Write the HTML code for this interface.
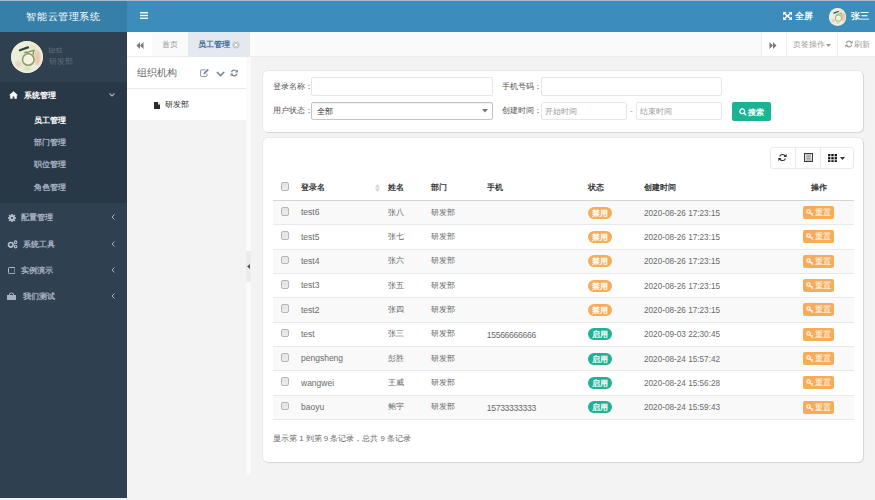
<!DOCTYPE html>
<html><head><meta charset="utf-8">
<style>
*{margin:0;padding:0;box-sizing:border-box}
html,body{width:875px;height:500px;overflow:hidden;background:#f3f3f4;font-family:"Liberation Sans",sans-serif;font-size:8px;color:#676a6c}
.a{position:absolute}
#topline{left:0;top:0;width:875px;height:1px;background:#a9bac8}
#logo{left:0;top:1px;width:127px;height:31px;background:#367fa9;color:#fff;font-size:10px;text-align:center;line-height:31px;letter-spacing:0.6px;text-indent:0px}
#hdr{left:127px;top:1px;width:748px;height:31px;background:#3c8dbc}
#side{left:0;top:32px;width:127px;height:466px;background:#2f4050}
#tabs{left:127px;top:32px;width:748px;height:25px;background:#fafafa;border-bottom:1px solid #ececec}
#tree{left:127px;top:57px;width:119px;height:63px;background:#fff}
#split{left:246px;top:57px;width:4.5px;height:418px;background:#fafafa}
.card{background:#fff;border-radius:5px;box-shadow:0 0 0 1px rgba(0,0,0,.04),1px 1px 1px rgba(0,0,0,.09)}
#c1{left:263px;top:70.5px;width:600px;height:61px}
#c2{left:263px;top:138px;width:600px;height:324px}
.avatar{border-radius:50%;background:radial-gradient(circle at 50% 55%,#f3efd8 0%,#ece6c6 55%,#e4dcb8 100%);overflow:hidden}
.ic{position:absolute}
.menu{position:absolute;left:0;width:127px;font-weight:bold;color:#a7b1c2;font-size:8.4px;line-height:12px}
.sub{position:absolute;left:33.5px;color:#a7b1c2;font-weight:bold;font-size:8.4px;line-height:12px}
.lbl{font-size:8px;line-height:12px;color:#555}
.inp{border:1px solid #e5e6e7;border-radius:2px;background:#fff}
.cb{width:8.5px;height:8.5px;border:1px solid #b5b5b5;border-radius:2px;background:linear-gradient(#e4e4e4,#ececec)}
.th{font-size:8px;line-height:12px;color:#333;font-weight:bold}
.td{font-size:8px;line-height:12px;color:#676a6c;white-space:nowrap}
.badge{width:23.5px;height:12px;border-radius:6px;color:#fff;font-size:8px;line-height:13.5px;text-align:center;font-weight:bold}
.btnw{width:31px;height:13px;border-radius:2px;background:#f8ac59;color:#fff;font-size:8px;line-height:13px}
</style></head><body>
<div class="a" id="topline"></div>
<div class="a" id="logo">智能云管理系统</div>
<div class="a" id="hdr"></div>
<svg class="a" style="left:140px;top:12px" width="8" height="7" viewBox="0 0 8 7"><rect x="0" y="0" width="8" height="1.4" fill="#fff"/><rect x="0" y="2.8" width="8" height="1.4" fill="#fff"/><rect x="0" y="5.6" width="8" height="1.4" fill="#fff"/></svg>
<svg class="a" style="left:783px;top:12px" width="9" height="8" viewBox="0 0 9 8"><g fill="#fff"><path d="M0 0H3.6L0 3.4z"/><path d="M9 0H5.4L9 3.4z"/><path d="M0 8H3.6L0 4.6z"/><path d="M9 8H5.4L9 4.6z"/></g><path d="M1 1 8 7M8 1 1 7" stroke="#fff" stroke-width="1.6"/></svg>
<div class="a" style="left:795px;top:9px;color:#fff;font-weight:bold;font-size:9px;line-height:14px">全屏</div>
<div class="a avatar" style="left:828.5px;top:8px;width:17.5px;height:17.5px"><svg width="100%" height="100%" viewBox="0 0 100 100" style="display:block"><defs><filter id="bl2"><feGaussianBlur stdDeviation="3"/></filter><filter id="sb2"><feGaussianBlur stdDeviation="1.2"/></filter></defs><circle cx="50" cy="50" r="50" fill="#edefdc"/><g filter="url(#bl2)" opacity="0.55"><ellipse cx="82" cy="52" rx="10" ry="24" fill="#e4a88c"/><ellipse cx="24" cy="72" rx="11" ry="9" fill="#e8b8a0"/><ellipse cx="68" cy="20" rx="12" ry="7" fill="#ecd8a0"/><ellipse cx="50" cy="86" rx="11" ry="6" fill="#b8d0a8"/><ellipse cx="40" cy="50" rx="6" ry="14" fill="#c8d8b8"/></g><g filter="url(#sb2)"><path d="M28 29 L53 20" stroke="#2f4a36" stroke-width="7" stroke-linecap="round"/><path d="M42 38 Q46 32 52 36 Q62 30 72 29 Q68 38 70 44" stroke="#7c9458" stroke-width="4" fill="none"/><circle cx="54" cy="58" r="18" fill="#f6f2e0" stroke="#889c64" stroke-width="4.5"/></g></svg></div>
<div class="a" style="left:851px;top:9px;color:#fff;font-size:9px;line-height:14px;font-weight:bold">张三</div>
<div class="a" id="side"></div>
<div class="a" style="left:0;top:82px;width:127px;height:121px;background:#293846"></div>
<div class="a avatar" style="left:11px;top:41px;width:32px;height:32px"><svg width="100%" height="100%" viewBox="0 0 100 100" style="display:block"><defs><filter id="bl1"><feGaussianBlur stdDeviation="3"/></filter><filter id="sb1"><feGaussianBlur stdDeviation="1.2"/></filter></defs><circle cx="50" cy="50" r="50" fill="#edefdc"/><g filter="url(#bl1)" opacity="0.55"><ellipse cx="82" cy="52" rx="10" ry="24" fill="#e4a88c"/><ellipse cx="24" cy="72" rx="11" ry="9" fill="#e8b8a0"/><ellipse cx="68" cy="20" rx="12" ry="7" fill="#ecd8a0"/><ellipse cx="50" cy="86" rx="11" ry="6" fill="#b8d0a8"/><ellipse cx="40" cy="50" rx="6" ry="14" fill="#c8d8b8"/></g><g filter="url(#sb1)"><path d="M28 29 L53 20" stroke="#2f4a36" stroke-width="7" stroke-linecap="round"/><path d="M42 38 Q46 32 52 36 Q62 30 72 29 Q68 38 70 44" stroke="#7c9458" stroke-width="4" fill="none"/><circle cx="54" cy="58" r="18" fill="#f6f2e0" stroke="#889c64" stroke-width="4.5"/></g></svg></div>
<div class="a" style="left:48.5px;top:45px;color:#5f6d7b;font-size:8.5px;line-height:11px">test</div>
<div class="a" style="left:48.5px;top:55.5px;color:#5f6d7b;font-size:8px;line-height:11px">研发部</div>
<svg class="ic" style="left:9px;top:91px" width="9" height="8" viewBox="0 0 9 8"><path d="M4.5 0.3 0 4.2h1.2V7.8h2.4V5.5h1.8v2.3h2.4V4.2H9z" fill="#fff"/></svg>
<div class="menu" style="top:89.3px;left:24px;color:#fff">系统管理</div>
<svg class="ic" style="left:109px;top:93px" width="6" height="4" viewBox="0 0 6 4"><path d="M0.5 0.5 3 3 5.5 0.5" stroke="#a7b1c2" stroke-width="1.1" fill="none"/></svg>
<div class="sub" style="top:113.5px;color:#fff;font-weight:bold">员工管理</div>
<div class="sub" style="top:136px">部门管理</div>
<div class="sub" style="top:158px">职位管理</div>
<div class="sub" style="top:180.5px">角色管理</div>
<svg class="ic" style="left:8px;top:214px" width="8" height="8" viewBox="0 0 8 8"><g fill="#b7c0cc"><circle cx="4" cy="4" r="2.7"/><g id="t"><rect x="3.2" y="0" width="1.6" height="8"/><rect x="0" y="3.2" width="8" height="1.6"/></g><use href="#t" transform="rotate(45 4 4)"/></g><circle cx="4" cy="4" r="1.1" fill="#2f4050"/></svg>
<div class="menu" style="top:211.3px;left:21px">配置管理</div>
<svg class="ic" style="left:7px;top:240px" width="11" height="9" viewBox="0 0 11 9"><circle cx="3.8" cy="4.8" r="2.3" fill="none" stroke="#b7c0cc" stroke-width="1.7"/><circle cx="8.6" cy="2.2" r="1.3" fill="none" stroke="#b7c0cc" stroke-width="1.1"/><circle cx="8.6" cy="6.6" r="1.3" fill="none" stroke="#b7c0cc" stroke-width="1.1"/></svg>
<div class="menu" style="top:237.5px;left:23px">系统工具</div>
<svg class="ic" style="left:7.5px;top:266.5px" width="7.5" height="7.2" viewBox="0 0 7.5 7.2"><rect x="0.5" y="0.5" width="6.5" height="6.2" rx="1" fill="none" stroke="#b7c0cc" stroke-width="1"/></svg>
<div class="menu" style="top:264px;left:21px">实例演示</div>
<svg class="ic" style="left:7px;top:292px" width="9" height="8" viewBox="0 0 9 8"><path d="M0 3h9v5H0z" fill="#a7b1c2"/><path d="M2.5 3V1.8Q4.5 0 6.5 1.8V3" stroke="#a7b1c2" stroke-width="1" fill="none"/></svg>
<div class="menu" style="top:290px;left:23px">我们测试</div>
<svg class="ic" style="left:111px;top:214px" width="4" height="6" viewBox="0 0 4 6"><path d="M3.5 0.5 1 3 3.5 5.5" stroke="#a7b1c2" stroke-width="1" fill="none"/></svg>
<svg class="ic" style="left:111px;top:241px" width="4" height="6" viewBox="0 0 4 6"><path d="M3.5 0.5 1 3 3.5 5.5" stroke="#a7b1c2" stroke-width="1" fill="none"/></svg>
<svg class="ic" style="left:111px;top:267px" width="4" height="6" viewBox="0 0 4 6"><path d="M3.5 0.5 1 3 3.5 5.5" stroke="#a7b1c2" stroke-width="1" fill="none"/></svg>
<svg class="ic" style="left:111px;top:293px" width="4" height="6" viewBox="0 0 4 6"><path d="M3.5 0.5 1 3 3.5 5.5" stroke="#a7b1c2" stroke-width="1" fill="none"/></svg>
<div class="a" id="tabs"></div>
<div class="a" style="left:127px;top:32px;width:25px;height:24px;background:#fff"></div><div class="a" style="left:761px;top:32px;width:114px;height:24px;background:#fff"></div>
<div class="a" style="left:188px;top:32px;width:62px;height:25px;background:#e4e9ef"></div>
<svg class="ic" style="left:136px;top:42px" width="8" height="7" viewBox="0 0 8 7"><path d="M4 0 0.5 3.5 4 7z M7.5 0 4 3.5 7.5 7z" fill="#7a7a7a"/></svg>
<div class="a" style="left:162px;top:38px;font-size:8px;line-height:13px;color:#999">首页</div>
<div class="a" style="left:198px;top:38px;font-size:8px;line-height:13px;color:#3d6a99;font-weight:bold">员工管理</div>
<svg class="ic" style="left:232px;top:41px" width="8" height="8" viewBox="0 0 8 8"><circle cx="4" cy="4" r="3.6" fill="#c8c8c8"/><path d="M2.6 2.6 5.4 5.4M5.4 2.6 2.6 5.4" stroke="#fff" stroke-width="1"/></svg>
<div class="a" style="left:761px;top:32px;width:1px;height:25px;background:#eee"></div>
<div class="a" style="left:786px;top:32px;width:1px;height:25px;background:#eee"></div>
<div class="a" style="left:837px;top:32px;width:1px;height:25px;background:#eee"></div>
<svg class="ic" style="left:769px;top:42px" width="8" height="7" viewBox="0 0 8 7"><path d="M0.5 0 4 3.5 0.5 7z M4 0 7.5 3.5 4 7z" fill="#7a7a7a"/></svg>
<div class="a" style="left:793px;top:38px;font-size:8px;line-height:13px;color:#999">页签操作</div>
<svg class="ic" style="left:826px;top:44px" width="5" height="3" viewBox="0 0 5 3"><path d="M0 0h5L2.5 3z" fill="#999"/></svg>
<svg class="ic" style="left:845px;top:40px" width="8" height="8" viewBox="0 0 8 8"><path d="M6.6 2.6A3 3 0 0 0 1.2 3.2M1.4 5.4A3 3 0 0 0 6.8 4.8" stroke="#999" stroke-width="1.2" fill="none"/><path d="M7.6 0.6V3.4H4.8z M0.4 7.4V4.6H3.2z" fill="#999"/></svg>
<div class="a" style="left:854px;top:38px;font-size:8px;line-height:13px;color:#999">刷新</div>
<div class="a" id="tree"></div>
<div class="a" style="left:137px;top:66px;font-size:10px;line-height:14px;color:#676a6c">组织机构</div>
<div class="a" style="left:127px;top:88px;width:119px;height:1px;background:#e7eaec"></div>
<svg class="ic" style="left:200px;top:69px" width="9" height="8" viewBox="0 0 9 8"><path d="M5.5 0.9H1.2Q0.6 0.9 0.6 1.5V6.8Q0.6 7.4 1.2 7.4H6.4Q7 7.4 7 6.8V4.6" stroke="#7b8799" stroke-width="0.9" fill="none"/><path d="M3.3 5.3 3.7 3.7 7.6 -0.2 8.9 1.1 5 5z" fill="#7b8799"/></svg>
<svg class="ic" style="left:215.5px;top:71px" width="9" height="6" viewBox="0 0 9 6"><path d="M0.9 1 4.5 4.6 8.1 1" stroke="#7b8799" stroke-width="1.7" fill="none"/></svg>
<svg class="ic" style="left:230px;top:69px" width="8.5" height="8" viewBox="0 0 8 8"><path d="M6.6 2.6A3 3 0 0 0 1.2 3.2M1.4 5.4A3 3 0 0 0 6.8 4.8" stroke="#7b8799" stroke-width="1.3" fill="none"/><path d="M7.6 0.6V3.4H4.8z M0.4 7.4V4.6H3.2z" fill="#7b8799"/></svg>
<svg class="ic" style="left:153.8px;top:101.5px" width="6.5" height="7.5" viewBox="0 0 7 8"><path d="M0 0H4.3L7 2.7V8H0z" fill="#2a2a2a"/><path d="M4.3 0V2.7H7z" fill="#fff"/></svg>
<div class="a" style="left:165px;top:99px;font-size:8px;line-height:12px;color:#333">研发部</div>
<div class="a" id="split"></div>
<div class="a" style="left:246px;top:251px;width:5px;height:31px;background:#ececec"></div>
<svg class="ic" style="left:247px;top:264px" width="3" height="5" viewBox="0 0 3 5"><path d="M3 0V5L0 2.5z" fill="#505560"/></svg>
<div class="a card" id="c1"></div>
<div class="a lbl" style="left:273px;top:81px">登录名称：</div>
<div class="a inp" style="left:311px;top:77px;width:182px;height:19px"></div>
<div class="a lbl" style="left:502px;top:81px">手机号码：</div>
<div class="a inp" style="left:541px;top:77px;width:181px;height:19px"></div>
<div class="a lbl" style="left:273px;top:105px">用户状态：</div>
<div class="a inp" style="left:311px;top:102px;width:182px;height:18px;border-color:#c4c4c4;box-shadow:inset 0 1px 1px rgba(0,0,0,.06)"></div>
<div class="a" style="left:317px;top:106px;color:#333;font-size:8px;line-height:12px">全部</div>
<svg class="ic" style="left:482px;top:109px" width="6" height="4" viewBox="0 0 6 4"><path d="M0 0h6L3 3.5z" fill="#777"/></svg>
<div class="a lbl" style="left:502px;top:105px">创建时间：</div>
<div class="a inp" style="left:541px;top:102px;width:86px;height:18px"></div>
<div class="a" style="left:545px;top:106px;color:#999;font-size:8px;line-height:12px">开始时间</div>
<div class="a" style="left:630px;top:105px;color:#888;font-size:8px;line-height:12px">-</div>
<div class="a inp" style="left:636px;top:102px;width:86px;height:18px"></div>
<div class="a" style="left:640px;top:106px;color:#999;font-size:8px;line-height:12px">结束时间</div>
<div class="a" style="left:732px;top:102px;width:39px;height:19px;background:#1ab394;border-radius:2px"></div>
<svg class="ic" style="left:739px;top:108px" width="8" height="8" viewBox="0 0 8 8"><circle cx="3.3" cy="3.3" r="2.4" stroke="#fff" stroke-width="1.3" fill="none"/><path d="M5 5 7.2 7.2" stroke="#fff" stroke-width="1.6"/></svg>
<div class="a" style="left:748px;top:106.5px;color:#fff;font-size:8px;line-height:12px;font-weight:bold">搜索</div>
<div class="a card" id="c2"></div>
<div class="a" style="left:770px;top:147px;width:84px;height:22px;border:1px solid #e7eaec;border-radius:3px;background:#fff"></div>
<div class="a" style="left:795px;top:148px;width:1px;height:20px;background:#e7eaec"></div>
<div class="a" style="left:820px;top:148px;width:1px;height:20px;background:#e7eaec"></div>
<svg class="ic" style="left:778px;top:153px" width="9" height="9" viewBox="0 0 9 9"><path d="M7.2 3.1A3.1 3.1 0 0 0 1.6 3.4M1.8 5.9A3.1 3.1 0 0 0 7.4 5.6" stroke="#222" stroke-width="1.15" fill="none"/><path d="M8.6 1V4H5.6z M0.4 8V5H3.4z" fill="#222"/></svg>
<svg class="ic" style="left:803.5px;top:153px" width="9" height="9" viewBox="0 0 9 9"><rect x="0.5" y="0.5" width="8" height="8" fill="#e6eef2" stroke="#3a3a3a" stroke-width="1"/><path d="M3 2.2H6M3 3.8H6M3 5.4H6M3 7H6" stroke="#777" stroke-width="0.8"/><path d="M2.3 1V8M6.7 1V8" stroke="#999" stroke-width="0.6"/></svg>
<svg class="ic" style="left:828px;top:153.5px" width="9" height="8.5" viewBox="0 0 9 8.5"><g fill="#1a1a1a"><rect x="0" y="0" width="2.4" height="2.3"/><rect x="3.3" y="0" width="2.4" height="2.3"/><rect x="6.6" y="0" width="2.4" height="2.3"/><rect x="0" y="3.1" width="2.4" height="2.3"/><rect x="3.3" y="3.1" width="2.4" height="2.3"/><rect x="6.6" y="3.1" width="2.4" height="2.3"/><rect x="0" y="6.2" width="2.4" height="2.3"/><rect x="3.3" y="6.2" width="2.4" height="2.3"/><rect x="6.6" y="6.2" width="2.4" height="2.3"/></g></svg>
<svg class="ic" style="left:840px;top:157px" width="5" height="3" viewBox="0 0 5 3"><path d="M0 0h5L2.5 3z" fill="#333"/></svg>
<div class="a cb" style="left:280.5px;top:182px"></div>
<div class="a th" style="left:301px;top:182px">登录名</div>
<svg class="ic" style="left:375px;top:184px" width="5" height="8" viewBox="0 0 5 8"><path d="M0 3.4 2.5 0 5 3.4z M0 4.6 2.5 8 5 4.6z" fill="#d5d5d5"/></svg>
<div class="a th" style="left:388px;top:182px">姓名</div>
<div class="a th" style="left:431px;top:182px">部门</div>
<div class="a th" style="left:487px;top:182px">手机</div>
<div class="a th" style="left:588px;top:182px">状态</div>
<div class="a th" style="left:644px;top:182px">创建时间</div>
<div class="a th" style="left:811px;top:182px">操作</div>
<div class="a" style="left:273px;top:200px;width:581px;height:1px;background:#d4d4d4"></div>
<div class="a" style="left:273px;top:201.00px;width:581px;height:24.35px;background:#f9f9f9;border-bottom:1px solid #e7eaec"></div>
<div class="a cb" style="left:280.5px;top:207.00px"></div>
<div class="a td" style="left:301px;top:206.20px;font-size:8.5px">test6</div>
<div class="a td" style="left:388px;top:206.50px">张八</div>
<div class="a td" style="left:431px;top:206.50px">研发部</div>
<div class="a badge" style="left:588px;top:206.50px;background:#f8ac59">禁用</div>
<div class="a td" style="left:644px;top:207.60px;font-size:8.2px">2020-08-26 17:23:15</div>
<div class="a btnw" style="left:803px;top:206.00px"><svg width="8" height="7" viewBox="0 0 8 7" style="position:absolute;left:3px;top:3px"><circle cx="2.5" cy="2.5" r="1.7" stroke="#fff" stroke-width="1.1" fill="none"/><path d="M3.7 3.7 7 6.6M5.6 5.3 6.6 4.4" stroke="#fff" stroke-width="1.1"/></svg><span style="position:absolute;left:12px;top:0">重置</span></div>
<div class="a" style="left:273px;top:225.35px;width:581px;height:24.35px;background:#fff;border-bottom:1px solid #e7eaec"></div>
<div class="a cb" style="left:280.5px;top:231.35px"></div>
<div class="a td" style="left:301px;top:230.55px;font-size:8.5px">test5</div>
<div class="a td" style="left:388px;top:230.85px">张七</div>
<div class="a td" style="left:431px;top:230.85px">研发部</div>
<div class="a badge" style="left:588px;top:230.85px;background:#f8ac59">禁用</div>
<div class="a td" style="left:644px;top:231.95px;font-size:8.2px">2020-08-26 17:23:15</div>
<div class="a btnw" style="left:803px;top:230.35px"><svg width="8" height="7" viewBox="0 0 8 7" style="position:absolute;left:3px;top:3px"><circle cx="2.5" cy="2.5" r="1.7" stroke="#fff" stroke-width="1.1" fill="none"/><path d="M3.7 3.7 7 6.6M5.6 5.3 6.6 4.4" stroke="#fff" stroke-width="1.1"/></svg><span style="position:absolute;left:12px;top:0">重置</span></div>
<div class="a" style="left:273px;top:249.70px;width:581px;height:24.35px;background:#f9f9f9;border-bottom:1px solid #e7eaec"></div>
<div class="a cb" style="left:280.5px;top:255.70px"></div>
<div class="a td" style="left:301px;top:254.90px;font-size:8.5px">test4</div>
<div class="a td" style="left:388px;top:255.20px">张六</div>
<div class="a td" style="left:431px;top:255.20px">研发部</div>
<div class="a badge" style="left:588px;top:255.20px;background:#f8ac59">禁用</div>
<div class="a td" style="left:644px;top:256.30px;font-size:8.2px">2020-08-26 17:23:15</div>
<div class="a btnw" style="left:803px;top:254.70px"><svg width="8" height="7" viewBox="0 0 8 7" style="position:absolute;left:3px;top:3px"><circle cx="2.5" cy="2.5" r="1.7" stroke="#fff" stroke-width="1.1" fill="none"/><path d="M3.7 3.7 7 6.6M5.6 5.3 6.6 4.4" stroke="#fff" stroke-width="1.1"/></svg><span style="position:absolute;left:12px;top:0">重置</span></div>
<div class="a" style="left:273px;top:274.05px;width:581px;height:24.35px;background:#fff;border-bottom:1px solid #e7eaec"></div>
<div class="a cb" style="left:280.5px;top:280.05px"></div>
<div class="a td" style="left:301px;top:279.25px;font-size:8.5px">test3</div>
<div class="a td" style="left:388px;top:279.55px">张五</div>
<div class="a td" style="left:431px;top:279.55px">研发部</div>
<div class="a badge" style="left:588px;top:279.55px;background:#f8ac59">禁用</div>
<div class="a td" style="left:644px;top:280.65px;font-size:8.2px">2020-08-26 17:23:15</div>
<div class="a btnw" style="left:803px;top:279.05px"><svg width="8" height="7" viewBox="0 0 8 7" style="position:absolute;left:3px;top:3px"><circle cx="2.5" cy="2.5" r="1.7" stroke="#fff" stroke-width="1.1" fill="none"/><path d="M3.7 3.7 7 6.6M5.6 5.3 6.6 4.4" stroke="#fff" stroke-width="1.1"/></svg><span style="position:absolute;left:12px;top:0">重置</span></div>
<div class="a" style="left:273px;top:298.40px;width:581px;height:24.35px;background:#f9f9f9;border-bottom:1px solid #e7eaec"></div>
<div class="a cb" style="left:280.5px;top:304.40px"></div>
<div class="a td" style="left:301px;top:303.60px;font-size:8.5px">test2</div>
<div class="a td" style="left:388px;top:303.90px">张四</div>
<div class="a td" style="left:431px;top:303.90px">研发部</div>
<div class="a badge" style="left:588px;top:303.90px;background:#f8ac59">禁用</div>
<div class="a td" style="left:644px;top:305.00px;font-size:8.2px">2020-08-26 17:23:15</div>
<div class="a btnw" style="left:803px;top:303.40px"><svg width="8" height="7" viewBox="0 0 8 7" style="position:absolute;left:3px;top:3px"><circle cx="2.5" cy="2.5" r="1.7" stroke="#fff" stroke-width="1.1" fill="none"/><path d="M3.7 3.7 7 6.6M5.6 5.3 6.6 4.4" stroke="#fff" stroke-width="1.1"/></svg><span style="position:absolute;left:12px;top:0">重置</span></div>
<div class="a" style="left:273px;top:322.75px;width:581px;height:24.35px;background:#fff;border-bottom:1px solid #e7eaec"></div>
<div class="a cb" style="left:280.5px;top:328.75px"></div>
<div class="a td" style="left:301px;top:327.95px;font-size:8.5px">test</div>
<div class="a td" style="left:388px;top:328.25px">张三</div>
<div class="a td" style="left:431px;top:328.25px">研发部</div>
<div class="a td" style="left:486.7px;top:328.55px;font-size:8.6px;letter-spacing:-0.3px">15566666666</div>
<div class="a badge" style="left:588px;top:328.25px;background:#1ab394">启用</div>
<div class="a td" style="left:644px;top:329.35px;font-size:8.2px">2020-09-03 22:30:45</div>
<div class="a btnw" style="left:803px;top:327.75px"><svg width="8" height="7" viewBox="0 0 8 7" style="position:absolute;left:3px;top:3px"><circle cx="2.5" cy="2.5" r="1.7" stroke="#fff" stroke-width="1.1" fill="none"/><path d="M3.7 3.7 7 6.6M5.6 5.3 6.6 4.4" stroke="#fff" stroke-width="1.1"/></svg><span style="position:absolute;left:12px;top:0">重置</span></div>
<div class="a" style="left:273px;top:347.10px;width:581px;height:24.35px;background:#f9f9f9;border-bottom:1px solid #e7eaec"></div>
<div class="a cb" style="left:280.5px;top:353.10px"></div>
<div class="a td" style="left:301px;top:352.30px;font-size:8.5px">pengsheng</div>
<div class="a td" style="left:388px;top:352.60px">彭胜</div>
<div class="a td" style="left:431px;top:352.60px">研发部</div>
<div class="a badge" style="left:588px;top:352.60px;background:#1ab394">启用</div>
<div class="a td" style="left:644px;top:353.70px;font-size:8.2px">2020-08-24 15:57:42</div>
<div class="a btnw" style="left:803px;top:352.10px"><svg width="8" height="7" viewBox="0 0 8 7" style="position:absolute;left:3px;top:3px"><circle cx="2.5" cy="2.5" r="1.7" stroke="#fff" stroke-width="1.1" fill="none"/><path d="M3.7 3.7 7 6.6M5.6 5.3 6.6 4.4" stroke="#fff" stroke-width="1.1"/></svg><span style="position:absolute;left:12px;top:0">重置</span></div>
<div class="a" style="left:273px;top:371.45px;width:581px;height:24.35px;background:#fff;border-bottom:1px solid #e7eaec"></div>
<div class="a cb" style="left:280.5px;top:377.45px"></div>
<div class="a td" style="left:301px;top:376.65px;font-size:8.5px">wangwei</div>
<div class="a td" style="left:388px;top:376.95px">王威</div>
<div class="a td" style="left:431px;top:376.95px">研发部</div>
<div class="a badge" style="left:588px;top:376.95px;background:#1ab394">启用</div>
<div class="a td" style="left:644px;top:378.05px;font-size:8.2px">2020-08-24 15:56:28</div>
<div class="a btnw" style="left:803px;top:376.45px"><svg width="8" height="7" viewBox="0 0 8 7" style="position:absolute;left:3px;top:3px"><circle cx="2.5" cy="2.5" r="1.7" stroke="#fff" stroke-width="1.1" fill="none"/><path d="M3.7 3.7 7 6.6M5.6 5.3 6.6 4.4" stroke="#fff" stroke-width="1.1"/></svg><span style="position:absolute;left:12px;top:0">重置</span></div>
<div class="a" style="left:273px;top:395.80px;width:581px;height:24.35px;background:#f9f9f9;border-bottom:1px solid #e7eaec"></div>
<div class="a cb" style="left:280.5px;top:401.80px"></div>
<div class="a td" style="left:301px;top:401.00px;font-size:8.5px">baoyu</div>
<div class="a td" style="left:388px;top:401.30px">鲍宇</div>
<div class="a td" style="left:431px;top:401.30px">研发部</div>
<div class="a td" style="left:486.7px;top:401.60px;font-size:8.6px;letter-spacing:-0.3px">15733333333</div>
<div class="a badge" style="left:588px;top:401.30px;background:#1ab394">启用</div>
<div class="a td" style="left:644px;top:402.40px;font-size:8.2px">2020-08-24 15:59:43</div>
<div class="a btnw" style="left:803px;top:400.80px"><svg width="8" height="7" viewBox="0 0 8 7" style="position:absolute;left:3px;top:3px"><circle cx="2.5" cy="2.5" r="1.7" stroke="#fff" stroke-width="1.1" fill="none"/><path d="M3.7 3.7 7 6.6M5.6 5.3 6.6 4.4" stroke="#fff" stroke-width="1.1"/></svg><span style="position:absolute;left:12px;top:0">重置</span></div>
<div class="a td" style="left:273px;top:432.5px;font-size:7.8px">显示第 1 到第 9 条记录，总共 9 条记录</div>
</body></html>
